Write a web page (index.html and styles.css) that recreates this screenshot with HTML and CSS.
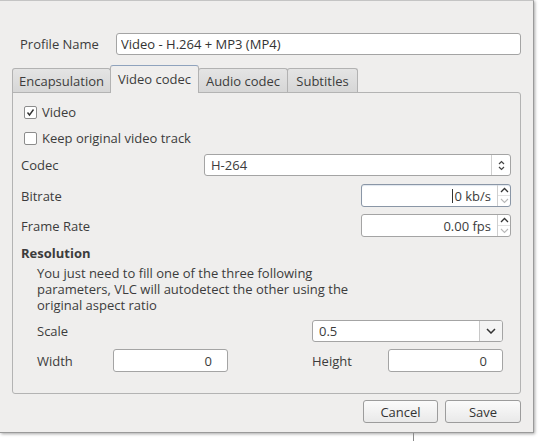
FILE: index.html
```
<!DOCTYPE html>
<html lang="en">
<head>
  <meta charset="UTF-8">
  <title>Profile edition</title>
  <link rel="stylesheet" href="styles.css">
</head>
<body>
  <div class="dialog">
    <div class="profile-row">
      <label class="profile-label" for="profile">Profile Name</label>
      <input class="text-input profile-input" id="profile" type="text" value="Video - H.264 + MP3 (MP4)">
    </div>

    <div class="tabs">
      <div class="tab tab-encap">Encapsulation</div>
      <div class="tab tab-video active">Video codec</div>
      <div class="tab tab-audio">Audio codec</div>
      <div class="tab tab-subs">Subtitles</div>
    </div>

    <div class="panel">
      <div class="check-row"><span class="checkbox checked"><svg width="9" height="9" viewBox="0 0 9 9"><polyline points="1.5,4.5 3.5,7 7.5,1.5" fill="none" stroke="#333" stroke-width="1.4"/></svg></span>Video</div>
      <div class="check-row"><span class="checkbox"></span>Keep original video track</div>

      <div class="field-row codec-row">
        <span>Codec</span>
        <div class="combo codec-combo">
          <span class="combo-value">H-264</span>
          <span class="combo-arrows">
            <svg width="7" height="11" viewBox="0 0 7 11"><polyline points="1,4 3.5,1.5 6,4" fill="none" stroke="#444" stroke-width="1.2"/><polyline points="1,7 3.5,9.5 6,7" fill="none" stroke="#444" stroke-width="1.2"/></svg>
          </span>
        </div>
      </div>

      <div class="field-row bitrate-row">
        <span>Bitrate</span>
        <div class="spin focused">
          <span class="spin-value"><span class="caret"></span>0 kb/s</span>
          <span class="spin-arrows">
            <span class="spin-up"><svg width="9" height="6" viewBox="0 0 9 6"><polyline points="1,5 4.5,1.5 8,5" fill="none" stroke="#333" stroke-width="1.3"/></svg></span>
            <span class="spin-down"><svg width="9" height="6" viewBox="0 0 9 6"><polyline points="1,1 4.5,4.5 8,1" fill="none" stroke="#b8b8b8" stroke-width="1.1"/></svg></span>
          </span>
        </div>
      </div>

      <div class="field-row frame-row">
        <span>Frame Rate</span>
        <div class="spin">
          <span class="spin-value">0.00 fps</span>
          <span class="spin-arrows">
            <span class="spin-up"><svg width="9" height="6" viewBox="0 0 9 6"><polyline points="1,5 4.5,1.5 8,5" fill="none" stroke="#333" stroke-width="1.3"/></svg></span>
            <span class="spin-down"><svg width="9" height="6" viewBox="0 0 9 6"><polyline points="1,1 4.5,4.5 8,1" fill="none" stroke="#b8b8b8" stroke-width="1.1"/></svg></span>
          </span>
        </div>
      </div>

      <div class="section-title">Resolution</div>
      <div class="resolution">
        <p class="hint">You just need to fill one of the three following parameters, VLC will autodetect the other using the original aspect ratio</p>
        <div class="res-grid">
          <span class="res-label">Scale</span>
          <div class="combo scale-combo">
            <span class="combo-value">0.5</span>
            <span class="drop-btn"><svg width="10" height="6" viewBox="0 0 10 6"><polyline points="1,1 5,5 9,1" fill="none" stroke="#333" stroke-width="1.5"/></svg></span>
          </div>
          <span class="res-label">Width</span>
          <div class="num-input">0</div>
          <span class="res-label height-label">Height</span>
          <div class="num-input">0</div>
        </div>
      </div>
    </div>

    <div class="buttons">
      <button class="btn cancel">Cancel</button>
      <button class="btn save">Save</button>
    </div>
  </div>

  <div class="under">
    <span class="under-left"></span>
    <span class="under-line"></span>
  </div>
</body>
</html>
```

FILE: styles.css
```
* { box-sizing: border-box; }
body { margin: 0; width: 540px; height: 441px; overflow: hidden; background: #fff; font-family: "Open Sans", sans-serif; font-size: 13px; color: #3c3c3c; }

.dialog { width: 534px; height: 433px; background: #efeeed; border-top: 1px solid #c4c4c4; border-right: 1px solid #9a9a9a; border-bottom: 1px solid #9a9a9a; box-shadow: 1px 1px 3px rgba(0,0,0,0.35); padding: 32px 12px 0 12px; display: flex; flex-direction: column; }

.profile-row { display: flex; align-items: center; height: 22px; padding-left: 8px; }
.profile-label { width: 96px; }
.text-input { font: inherit; color: #333; border: 1px solid #a4a4a4; border-radius: 3px; background: #fff; height: 22px; padding: 0 4px; outline: none; }
.profile-input { flex: 1; }

.tabs { display: flex; height: 28px; margin-top: 10px; }
.tab { height: 25px; margin-top: 3px; border: 1px solid #b2b2b2; border-bottom: none; border-radius: 3px 3px 0 0; background: linear-gradient(#e4e4e4, #d6d6d6); display: flex; align-items: center; justify-content: center; margin-left: -1px; }
.tab-encap { width: 99px; margin-left: 0; }
.tab-video { width: 89px; }
.tab-audio { width: 90px; }
.tab-subs { width: 71px; }
.tab.active { height: 28px; margin-top: 0; background: #efeeed; border-top-color: #8fa3bd; position: relative; z-index: 1; padding-bottom: 2px; }

.panel { height: 302px; margin-top: -1px; border: 1px solid #b3b3b3; border-radius: 0 3px 3px 3px; padding: 6px 9px 0 8px; display: flex; flex-direction: column; }

.check-row { height: 26px; display: flex; align-items: center; padding-left: 3px; }
.checkbox { width: 13px; height: 13px; border: 1px solid #8c8c8c; border-radius: 2px; background: #fff; margin-right: 5px; display: flex; align-items: center; justify-content: center; }

.field-row { display: flex; align-items: center; justify-content: space-between; }
.codec-row { margin-top: 3px; height: 22px; }
.bitrate-row { margin-top: 8px; height: 23px; }
.frame-row { margin-top: 7px; height: 23px; }

.combo { display: flex; height: 22px; border: 1px solid #a4a4a4; border-radius: 3px; background: #fff; }
.combo-value { flex: 1; padding-left: 6px; display: flex; align-items: center; }
.codec-combo { width: 307px; }
.combo-arrows { width: 19px; border-left: 1px solid #cfcfcf; display: flex; align-items: center; justify-content: center; }

.spin { width: 150px; height: 23px; display: flex; border: 1px solid #a4a4a4; border-radius: 3px; background: #fff; }
.spin.focused { border-color: #8a96a6; box-shadow: inset 0 1px 1px #dfe6ee; }
.spin-value { flex: 1; display: flex; align-items: center; justify-content: flex-end; padding-right: 6px; }
.caret { width: 1px; height: 14px; background: #333; margin-right: 1px; }
.spin-arrows { width: 13px; border-left: 1px solid #cfcfcf; display: flex; flex-direction: column; }
.spin-up, .spin-down { flex: 1; display: flex; align-items: center; justify-content: center; }
.spin-down { border-top: 1px solid #e2e2e2; }

.section-title { margin-top: 8px; height: 16px; line-height: 16px; font-weight: bold; }
.resolution { padding: 0 8px 0 16px; }
.hint { margin: 4px 0 0; width: 330px; line-height: 16px; }

.res-grid { margin-top: 7px; display: grid; grid-template-columns: 76px 115px 1fr 76px 115px; grid-template-rows: 22px 23px; row-gap: 7px; align-items: center; }
.res-grid .res-label:first-child { grid-column: 1 / 4; }
.scale-combo { grid-column: 4 / 6; }
.drop-btn { width: 23px; border-left: 1px solid #c8c8c8; background: #f4f4f4; border-radius: 0 2px 2px 0; display: flex; align-items: center; justify-content: center; }
.num-input { height: 23px; border: 1px solid #a4a4a4; border-radius: 3px; background: #fff; display: flex; align-items: center; justify-content: flex-end; padding-right: 15px; }
.height-label { grid-column: 4; }

.buttons { margin-top: 6px; display: flex; justify-content: flex-end; gap: 7px; }
.btn { font: inherit; color: #333; width: 75px; height: 23px; border: 1px solid #9c9c9c; border-radius: 3px; background: linear-gradient(#fbfbfb, #e9e9e9); padding: 0; }
.save { width: 76px; }

.under { height: 8px; display: flex; }
.under-left { width: 413px; }
.under-line { width: 1px; background: #8a8a8a; }
```
